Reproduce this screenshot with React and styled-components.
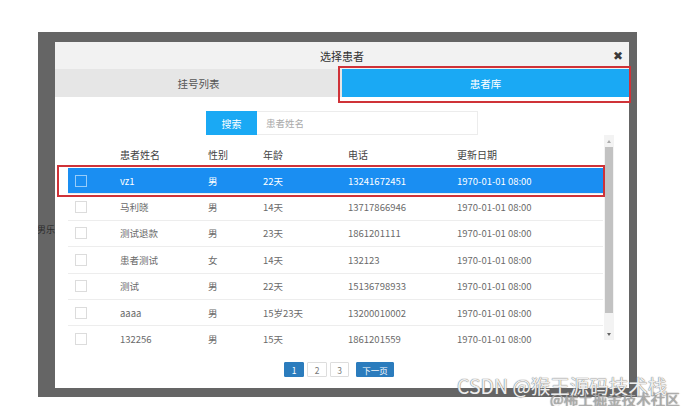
import React from 'react'
import styled, { createGlobalStyle } from 'styled-components'

const GlobalStyle = createGlobalStyle`
  html, body {
    margin: 0;
    padding: 0;
    background: #fff;
  }
  body {
    font-family: "Noto Sans CJK SC", "Noto Sans", sans-serif;
  }
`

const Page = styled.div`
  position: relative;
  width: 684px;
  height: 406px;
  overflow: hidden;
  box-sizing: border-box;
  padding: 32px 0 0 38px;
`

const Backdrop = styled.div`
  display: flex;
  width: 599px;
  height: 365px;
  box-sizing: border-box;
  padding: 10px 8px 9px 0;
  background: #656565;
`

const Gutter = styled.div`
  width: 17px;
  overflow: hidden;
  padding-top: 182px;
  font-size: 9px;
  line-height: 12px;
  color: #2c2c2c;
  white-space: nowrap;
  text-indent: -1px;
`

const Modal = styled.div`
  position: relative;
  flex: 1;
  display: flex;
  flex-direction: column;
  background: #fff;
`

const TitleBar = styled.div`
  display: grid;
  grid-template-columns: 1fr auto 1fr;
  align-items: center;
  height: 27px;
  background: #f2f2f2;
  font-size: 11px;
  color: #333;
`

const Title = styled.span`
  grid-column: 2;
`

const Close = styled.span`
  justify-self: end;
  margin-right: 6px;
  font-family: "DejaVu Sans", sans-serif;
  font-weight: bold;
  font-size: 12px;
  color: #3a3a3a;
`

const Tabs = styled.div`
  display: flex;
  height: 28px;
`

const Tab = styled.div`
  flex: 1;
  display: flex;
  align-items: center;
  justify-content: center;
  font-size: 10.5px;
  background: ${(p) => (p.$active ? '#1aa9f4' : '#e6e6e6')};
  color: ${(p) => (p.$active ? '#fff' : '#555')};
`

const SearchBar = styled.div`
  display: flex;
  justify-content: center;
  height: 24px;
  margin-top: 14px;
`

const SearchButton = styled.button`
  width: 51px;
  padding: 0;
  border: 0;
  background: #1aa9f4;
  color: #fff;
  font-family: inherit;
  font-size: 10px;
`

const SearchInput = styled.input`
  width: 221px;
  box-sizing: border-box;
  padding: 0 9px;
  border: 1px solid #ececec;
  border-left: 0;
  font-family: inherit;
  font-size: 9.5px;
  outline: none;
  &::placeholder {
    color: #aaa;
  }
`

const TableArea = styled.div`
  display: flex;
  height: 210px;
  padding: 0 15px 0 13px;
`

const Viewport = styled.div`
  flex: 1;
  overflow: hidden;
  padding-top: 5px;
`

const columns = '52px 88px 55px 85px 109px 1fr'

const HeaderRow = styled.div`
  display: grid;
  grid-template-columns: ${columns};
  align-items: center;
  height: 28px;
  font-size: 10px;
  color: #444;
`

const Row = styled.div`
  display: grid;
  grid-template-columns: ${columns};
  align-items: center;
  height: 26.4px;
  box-sizing: border-box;
  border-bottom: 1px solid #ededed;
  font-size: 9.5px;
  color: ${(p) => (p.$selected ? '#fff' : '#6a6a6a')};
  background: ${(p) => (p.$selected ? '#1a8ef2' : 'transparent')};
`

const Check = styled.span`
  width: 12px;
  height: 12px;
  margin-left: 7px;
  box-sizing: border-box;
  border: 1px solid ${(p) => (p.$selected ? 'rgba(255,255,255,0.55)' : '#dcdcdc')};
`

const Cell = styled.span`
  white-space: nowrap;
`

const Scrollbar = styled.div`
  display: flex;
  flex-direction: column;
  align-items: center;
  width: 10px;
  height: 205px;
  margin-left: 1px;
  background: #f3f3f3;
`

const ArrowBox = styled.div`
  display: flex;
  align-items: center;
  justify-content: center;
  height: 12px;
`

const Arrow = styled.span`
  width: 0;
  height: 0;
  border-left: 2.5px solid transparent;
  border-right: 2.5px solid transparent;
  ${(p) =>
    p.$down
      ? 'border-top: 3px solid #666;'
      : 'border-bottom: 3px solid #aaa;'}
`

const Thumb = styled.div`
  width: 8px;
  height: 166px;
  background: #c2c2c2;
`

const Spacer = styled.div`
  flex: 1;
`

const Pager = styled.div`
  display: flex;
  justify-content: center;
  gap: 3px;
  margin-top: 17px;
  padding-right: 6px;
`

const PageButton = styled.span`
  display: flex;
  align-items: center;
  justify-content: center;
  width: ${(p) => p.$w}px;
  height: 15px;
  box-sizing: border-box;
  margin-left: ${(p) => (p.$gap ? 4 : 0)}px;
  font-size: 8.5px;
  border-radius: 1px;
  background: ${(p) => (p.$blue ? '#2b7cbd' : '#fff')};
  color: ${(p) => (p.$blue ? '#fff' : '#777')};
  border: 1px solid ${(p) => (p.$blue ? '#2b7cbd' : '#ddd')};
`

const Outline = styled.div`
  position: absolute;
  left: ${(p) => p.$x}px;
  top: ${(p) => p.$y}px;
  width: ${(p) => p.$w}px;
  height: ${(p) => p.$h}px;
  box-sizing: border-box;
  border: 2px solid #cf3238;
  pointer-events: none;
`

const Watermark = styled.div`
  position: absolute;
  left: ${(p) => p.$x}px;
  top: ${(p) => p.$y}px;
  font-size: ${(p) => p.$size}px;
  line-height: 1.2;
  white-space: nowrap;
  color: rgba(255, 255, 255, ${(p) => p.$alpha});
  text-shadow: 0 0 1px #777, 0 0 1px #777;
`

const patients = [
  { name: 'vz1', sex: '男', age: '22天', phone: '13241672451' },
  { name: '马利晓', sex: '男', age: '14天', phone: '13717866946' },
  { name: '测试退款', sex: '男', age: '23天', phone: '1861201111' },
  { name: '患者测试', sex: '女', age: '14天', phone: '132123' },
  { name: '测试', sex: '男', age: '22天', phone: '15136798933' },
  { name: 'aaaa', sex: '男', age: '15岁23天', phone: '13200010002' },
  { name: '132256', sex: '男', age: '15天', phone: '1861201559' },
]

export default function App() {
  return (
    <Page>
      <GlobalStyle />
      <Backdrop>
        <Gutter>男乐</Gutter>
        <Modal>
          <TitleBar>
            <Title>选择患者</Title>
            <Close>✖</Close>
          </TitleBar>
          <Tabs>
            <Tab>挂号列表</Tab>
            <Tab $active>患者库</Tab>
          </Tabs>
          <SearchBar>
            <SearchButton>搜索</SearchButton>
            <SearchInput placeholder="患者姓名" />
          </SearchBar>
          <TableArea>
            <Viewport>
              <HeaderRow>
                <span />
                <Cell>患者姓名</Cell>
                <Cell>性别</Cell>
                <Cell>年龄</Cell>
                <Cell>电话</Cell>
                <Cell>更新日期</Cell>
              </HeaderRow>
              {patients.map((p, i) => (
                <Row key={i} $selected={i === 0}>
                  <Check $selected={i === 0} />
                  <Cell>{p.name}</Cell>
                  <Cell>{p.sex}</Cell>
                  <Cell>{p.age}</Cell>
                  <Cell>{p.phone}</Cell>
                  <Cell>1970-01-01 08:00</Cell>
                </Row>
              ))}
            </Viewport>
            <Scrollbar>
              <ArrowBox>
                <Arrow />
              </ArrowBox>
              <Thumb />
              <Spacer />
              <ArrowBox>
                <Arrow $down />
              </ArrowBox>
            </Scrollbar>
          </TableArea>
          <Pager>
            <PageButton $w={20} $blue>1</PageButton>
            <PageButton $w={20}>2</PageButton>
            <PageButton $w={19}>3</PageButton>
            <PageButton $w={38} $blue $gap>下一页</PageButton>
          </Pager>
          <Outline $x={283} $y={24} $w={293} $h={37} />
          <Outline $x={2} $y={123} $w={548} $h={32} />
        </Modal>
      </Backdrop>
      <Watermark $x={550} $y={390} $size={14.5} $alpha={0.4}>@稀土掘金技术社区</Watermark>
      <Watermark $x={457} $y={374} $size={19.5} $alpha={0.9}>CSDN @猴王源码技术栈</Watermark>
    </Page>
  )
}
